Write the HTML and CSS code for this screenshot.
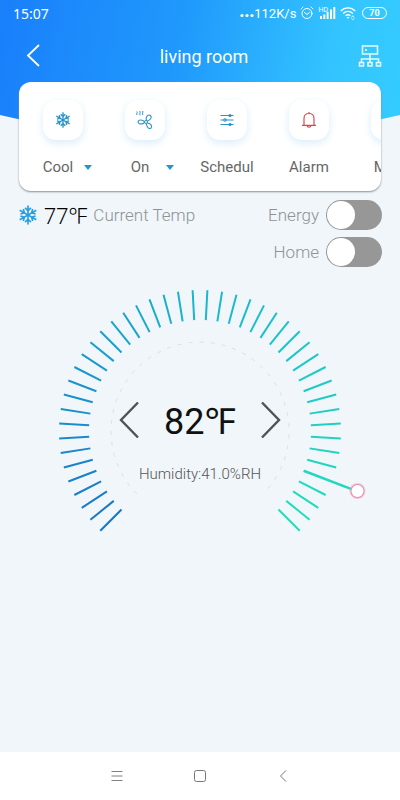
FILE: index.html
```html
<!DOCTYPE html>
<html lang="en">
<head>
<meta charset="utf-8">
<meta name="viewport" content="width=device-width, initial-scale=1">
<title>living room</title>
<link rel="stylesheet" href="styles.css">
</head>
<body>
<svg class="defs" width="0" height="0" aria-hidden="true">
  <symbol id="snow" viewBox="0 0 24 24">
    <g fill="none" stroke="currentColor" stroke-width="2">
      <g id="arm"><path d="M12 12V.5M8.500 3.500L12 7l3.500-3.500"/></g>
      <use href="#arm" transform="rotate(60 12 12)"/>
      <use href="#arm" transform="rotate(120 12 12)"/>
      <use href="#arm" transform="rotate(180 12 12)"/>
      <use href="#arm" transform="rotate(240 12 12)"/>
      <use href="#arm" transform="rotate(300 12 12)"/>
    </g>
  </symbol>
</svg>
<div class="app">
  <div class="hero">
    <div class="status">
      <span class="clock">15:07</span>
      <span class="net">
        <svg width="14" height="14" viewBox="0 0 14 14" fill="#fff"><circle cx="2" cy="9.500" r="1.600"/><circle cx="7" cy="9.500" r="1.600"/><circle cx="12" cy="9.500" r="1.600"/></svg>
        <span>112K/s</span>
      </span>
      <svg width="14" height="14" viewBox="0 0 14 14" fill="none" stroke="#fff" stroke-linecap="round"><circle cx="7" cy="7.500" r="5"/><path d="M4.500 6.500L7 8.500l2.500-2M1 3l2-2M13 3l-2-2"/></svg>
      <span class="signal">
        <span class="hd">HD</span>
        <svg width="16" height="12" viewBox="0 0 16 12" fill="#fff"><path d="M0 9h2v3H0zM3.300 7.500h2V12h-2zM6.600 5h2v7h-2zM10 2.500h2V12h-2zM13.300 0h2v12h-2z"/></svg>
      </span>
      <svg width="16" height="14" viewBox="0 0 16 14" fill="none" stroke="#fff" stroke-width="1.400"><path d="M.8 5c4-4.200 10.400-4.200 14.400 0M3.200 7.500c2.700-2.800 6.900-2.800 9.600 0M5.600 9.800c1.400-1.300 3.400-1.300 4.800 0"/><path d="M8 13l-1.500-2h3z" fill="#fff" stroke="none"/><path d="M11.500 11.500l1.300-1.800 1.300 1.800M11.500 12.300l1.300 1.500 1.300-1.500" stroke-width=".8"/></svg>
      <span class="battery">70</span>
    </div>
    <header class="bar">
      <button class="icon-btn" aria-label="Back"><svg width="14" height="24" viewBox="0 0 14 24" fill="none" stroke="#fff" stroke-width="1.800"><path d="M13 1L2 11.500 13 22"/></svg></button>
      <h1>living room</h1>
      <button class="icon-btn" aria-label="Devices"><svg width="24" height="24" viewBox="0 0 24 24" fill="none" stroke="#e2fbff" stroke-width="1.600"><path d="M4.500 2h15v8h-15zM12 10v9M3.500 19v-4h17v4M1.500 18.500h4V22h-4zM10 18.500h4V22h-4zM18.500 18.500h4V22h-4z"/><path d="M7 6h2" stroke-width="2"/></svg></button>
    </header>
  </div>

  <section class="card">
    <div class="item">
      <div class="tile blue"><svg width="16" height="16"><use href="#snow"/></svg></div>
      <label class="pick"><select aria-label="Mode"><option>Cool</option></select><svg width="8" height="5" viewBox="0 0 8 5"><path d="M0 0h8L4 5z" fill="#2196d6"/></svg></label>
    </div>
    <div class="item">
      <div class="tile blue"><svg width="20" height="20" viewBox="0 0 20 20" fill="none" stroke="currentColor"><path d="M1.800 1.500c1.200 1.500-1 2 .2 3.500M4.800 1c1.300 1.800-1 2.400.3 4.200M7.600 1c1.200 1.500-1 2 .2 4"/><circle cx="11" cy="12" r="1.500"/><path d="M11.500 10.500C10 7 13 4 15.500 5.500c2 2-.5 5-3.300 5.500M9.500 12.500C7 15 2.500 14 3.200 11.300 4 9 7.500 10 9.500 11.500M12.200 13c3 .2 5.500 2.500 4 4.800-2.200 2-4.500-.5-4.700-3.800" stroke-width="1.100"/></svg></div>
      <label class="pick"><select aria-label="Fan"><option>On</option></select><svg width="8" height="5" viewBox="0 0 8 5"><path d="M0 0h8L4 5z" fill="#2196d6"/></svg></label>
    </div>
    <button class="item">
      <span class="tile blue"><svg width="14" height="14" viewBox="0 0 14 14" fill="none" stroke="currentColor" stroke-width="1.200"><path d="M.5 2.500h13M.5 7h13M.5 11.500h13"/><g fill="currentColor" stroke="none"><circle cx="10" cy="2.500" r="1.600"/><circle cx="10" cy="11.500" r="1.600"/></g><circle cx="5" cy="7" r="1.200" fill="#fff"/></svg></span>
      <span class="name">Schedul</span>
    </button>
    <button class="item">
      <span class="tile red"><svg width="16" height="18" viewBox="0 0 16 18" fill="none" stroke="currentColor" stroke-width="1.200" stroke-linejoin="round"><path d="M3 14V7.500C3 4.500 5 2.500 8 2.500s5 2 5 5V14M1 14.300h14M8 2.500V1M6 14.500c.3 2.200 3.700 2.200 4 0"/></svg></span>
      <span class="name">Alarm</span>
    </button>
    <button class="item">
      <span class="tile"></span>
      <span class="name">More</span>
    </button>
  </section>

  <section class="state">
    <div class="current">
      <svg width="20" height="20"><use href="#snow"/></svg>
      <span class="now">77℉</span>
      <span class="hint">Current Temp</span>
    </div>
    <div class="switches">
      <label>Energy<input type="checkbox" role="switch"></label>
      <label>Home<input type="checkbox" role="switch"></label>
    </div>
  </section>

  <main class="dial">
    <svg class="ring" viewBox="-180 -145 360 250" aria-hidden="true">
      <path d="M-63 63A89 89 0 1 1 63 63" fill="none" stroke="#dae0e4" stroke-width="1" stroke-dasharray="4 7"/>
      <g id="ticks"></g>
      <circle cx="157.500" cy="60" r="8" fill="#f2a3bd" opacity=".55"/>
      <circle cx="157.500" cy="60" r="7" fill="#e287a5" opacity=".8"/>
      <circle cx="157.500" cy="60" r="6" fill="#fff"/>
    </svg>
    <div class="reading">
      <div class="setpoint">
        <button aria-label="Lower"><svg width="20" height="38" viewBox="0 0 20 38" fill="none" stroke="#505356" stroke-width="2.400"><path d="M19 1.500L2 19l17 17.500"/></svg></button>
        <output>82℉</output>
        <button aria-label="Raise"><svg width="20" height="38" viewBox="0 0 20 38" fill="none" stroke="#505356" stroke-width="2.400"><path d="M1 1.500L18 19 1 36.500"/></svg></button>
      </div>
      <p>Humidity:41.0%RH</p>
    </div>
  </main>

  <nav class="sys">
    <button aria-label="Recent"><svg width="12" height="12" viewBox="0 0 12 12" stroke="#808080"><path d="M.5 1.500h11M.5 6h11M.5 10.500h11"/></svg></button>
    <button aria-label="Home screen"><svg width="12" height="12" viewBox="0 0 12 12" fill="none" stroke="#777"><rect x=".5" y=".5" width="11" height="11" rx="2"/></svg></button>
    <button aria-label="Back"><svg width="8" height="12" viewBox="0 0 8 12" fill="none" stroke="#777"><path d="M7 .5L1.500 6 7 11.500"/></svg></button>
  </nav>
</div>
<script src="script.js"></script>
</body>
</html>
```
FILE: styles.css
```css
* { box-sizing: border-box; }
body {
  margin: 0;
  background: #f0f6fa;
  font-family: Roboto, "Noto Sans", sans-serif;
  color: #555;
}
.defs { position: absolute; }
svg { display: block; flex: none; }
button {
  padding: 0;
  border: 0;
  background: none;
  font: inherit;
  color: inherit;
}
.app {
  display: flex;
  flex-direction: column;
  min-height: 100vh;
  overflow: hidden;
}
.hero {
  height: 160px;
  margin-bottom: -78px;
  background: linear-gradient(100deg, #197ffb, #209afc 45%, #33c4ff 80%, #34ccff);
  clip-path: polygon(0 0, 100% 0, 100% 115px, 50% 160px, 0 115px);
  color: #fff;
}
.status {
  display: flex;
  align-items: center;
  gap: 4px;
  height: 26px;
  padding: 0 13px;
  font-size: 14px;
}
.clock {
  margin-right: auto;
  font-family: "Noto Sans", sans-serif;
}
.net { display: flex; align-items: center; font-size: 13px; }
.signal { display: flex; align-items: flex-end; }
.hd { align-self: flex-start; margin-right: -8px; font-size: 7px; line-height: 7px; }
.battery {
  width: 25px;
  margin-left: 2px;
  border: 1px solid #fff;
  border-radius: 6px;
  font-size: 9px;
  font-weight: 700;
  line-height: 10px;
  text-align: center;
}
.bar {
  display: flex;
  align-items: center;
  height: 60px;
  padding: 0 18px 0 26px;
}
.icon-btn { display: flex; }
h1 {
  flex: 1;
  margin: 0;
  padding-left: 10px;
  font-size: 18px;
  font-weight: 400;
  text-align: center;
}
.card {
  position: relative;
  display: flex;
  height: 109px;
  margin: 0 19px;
  padding: 18px 3px 0;
  border-radius: 12px;
  background: #fff;
  box-shadow: 0 1px 2px #8a8f93;
  overflow: hidden;
}
.item {
  display: flex;
  flex: none;
  flex-direction: column;
  align-items: center;
  gap: 17px;
  width: 82px;
  font-size: 15px;
  line-height: 20px;
  color: #666;
}
.tile {
  display: grid;
  place-items: center;
  width: 40px;
  height: 40px;
  border-radius: 13px;
  background: #fff;
  box-shadow: 0 3px 8px #d8edfa;
}
.blue { color: #2592c9; }
.red { color: #dc4a50; }
.pick {
  display: flex;
  align-items: center;
  align-self: stretch;
  padding-left: 16px;
}
select {
  width: 40px;
  padding: 0;
  border: 0;
  appearance: none;
  background: none;
  font: inherit;
  color: inherit;
  text-align: center;
}
.pick svg { pointer-events: none; margin-left: 6px; }
.state {
  display: flex;
  justify-content: space-between;
  padding: 9px 18px 0;
}
.current {
  display: flex;
  align-items: center;
  height: 30px;
  color: #2a9fe0;
}
.now { margin-left: 6px; font-size: 22px; font-weight: 300; color: #000; }
.hint, .switches { font-size: 17px; font-weight: 300; color: #8f9396; }
.hint { margin-left: 6px; }
.switches { display: grid; gap: 7px; }
.switches label {
  display: flex;
  align-items: center;
  justify-content: flex-end;
  gap: 7px;
}
.switches input {
  width: 56px;
  height: 30px;
  margin: 0;
  padding: 1px;
  border-radius: 15px;
  appearance: none;
  background: #979797;
}
.switches input::before {
  content: "";
  display: block;
  width: 28px;
  height: 28px;
  border-radius: 50%;
  background: #fff;
}
.switches input:checked::before { margin-left: auto; }
.dial {
  display: grid;
  justify-items: center;
  margin-top: 19px;
}
.ring, .reading { grid-area: 1 / 1; }
.ring { width: 360px; }
.reading { padding-top: 112px; }
.setpoint {
  display: flex;
  align-items: center;
  justify-content: space-between;
  width: 162px;
  height: 44px;
}
output { font-size: 36px; color: #111; }
.reading p {
  margin: 22px 0 0;
  font-size: 15px;
  font-weight: 300;
  line-height: 20px;
  text-align: center;
}
.sys {
  display: flex;
  align-items: center;
  justify-content: center;
  gap: 63px;
  height: 48px;
  margin-top: auto;
  background: #fff;
}
.sys button { display: grid; place-items: center; width: 20px; height: 20px; }
```
FILE: script.js
```js
const ticks = document.getElementById('ticks');
const stops = [[24, 118, 198], [26, 182, 206], [34, 222, 188]];
const count = 46;
const active = 41;

for (let i = 0; i < count; i++) {
  const t = (i / (count - 1)) * 2;
  const k = Math.min(1, Math.floor(t));
  const rgb = stops[k].map((c, n) => Math.round(c + (stops[k + 1][n] - c) * (t - k)));
  const line = document.createElementNS('http://www.w3.org/2000/svg', 'line');
  line.setAttribute('y1', -111);
  line.setAttribute('y2', i === active ? -163 : -141);
  line.setAttribute('stroke', `rgb(${rgb})`);
  line.setAttribute('stroke-width', i === active ? 2.5 : 2);
  line.setAttribute('transform', `rotate(${-135 + i * 6})`);
  ticks.append(line);
}
```
